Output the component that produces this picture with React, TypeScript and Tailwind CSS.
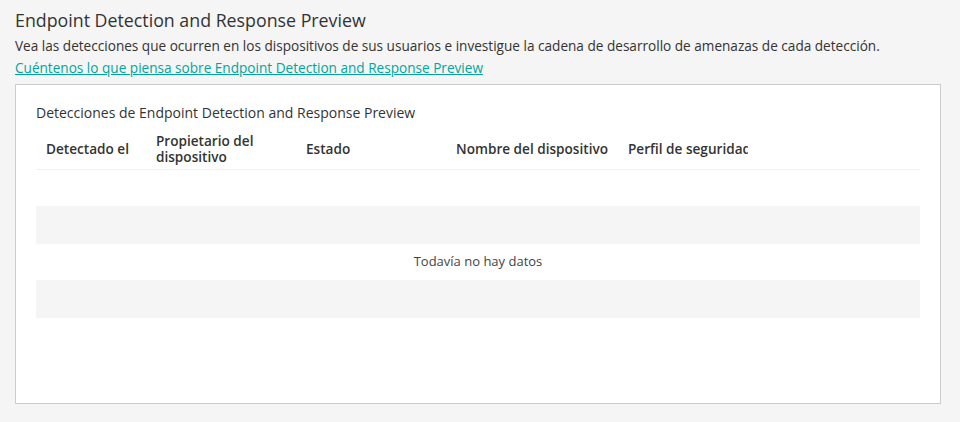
import React from 'react';

const columns = [
  { label: 'Detectado el', width: 'w-[110px]' },
  { label: 'Propietario del dispositivo', width: 'w-[150px]' },
  { label: 'Estado', width: 'w-[150px]' },
  { label: 'Nombre del dispositivo', width: 'w-[172px]' },
];

const App: React.FC = () => {
  return (
    <div className="min-h-[422px] bg-[#f5f5f5] pl-[15px] pr-[19px] pt-[9px] pb-[18px] font-['Open_Sans',sans-serif] text-[#333]">
      <h1 className="text-[17.8px] leading-[22px] text-[#333]">Endpoint Detection and Response Preview</h1>
      <p className="mt-[4px] text-[13.6px] leading-[22px] text-[#333]">
        Vea las detecciones que ocurren en los dispositivos de sus usuarios e investigue la cadena de desarrollo de amenazas de cada detección.
      </p>
      <a href="#" className="block text-[13.6px] leading-[22px] text-[#00a5a0] underline">
        Cuéntenos lo que piensa sobre Endpoint Detection and Response Preview
      </a>

      <div className="mt-[5px] h-[320px] border border-[#cccccc] bg-white px-[20px] pt-[18px]">
        <h2 className="text-[14px] leading-[20px] text-[#333]">Detecciones de Endpoint Detection and Response Preview</h2>

        {/* Table header */}
        <div className="mt-[5px] flex h-[42px] items-center border-b border-[#f0f0f0] pl-[10px] text-[13.6px] font-semibold leading-[16px] text-[#333]">
          {columns.map(col => (
            <div key={col.label} className={`${col.width} shrink-0 pr-[4px]`}>
              {col.label === 'Propietario del dispositivo' ? (
                <>Propietario del<br />dispositivo</>
              ) : (
                <span className="whitespace-nowrap">{col.label}</span>
              )}
            </div>
          ))}
          <div className="w-[120px] shrink-0 overflow-hidden whitespace-nowrap">Perfil de seguridad</div>
        </div>

        {/* Empty state */}
        <div className="mt-[36px] h-[38px] bg-[#f5f5f5]" />
        <div className="flex h-[36px] items-center justify-center text-[13px] text-[#444]">Todavía no hay datos</div>
        <div className="h-[38px] bg-[#f5f5f5]" />
      </div>
    </div>
  );
};

export default App;
